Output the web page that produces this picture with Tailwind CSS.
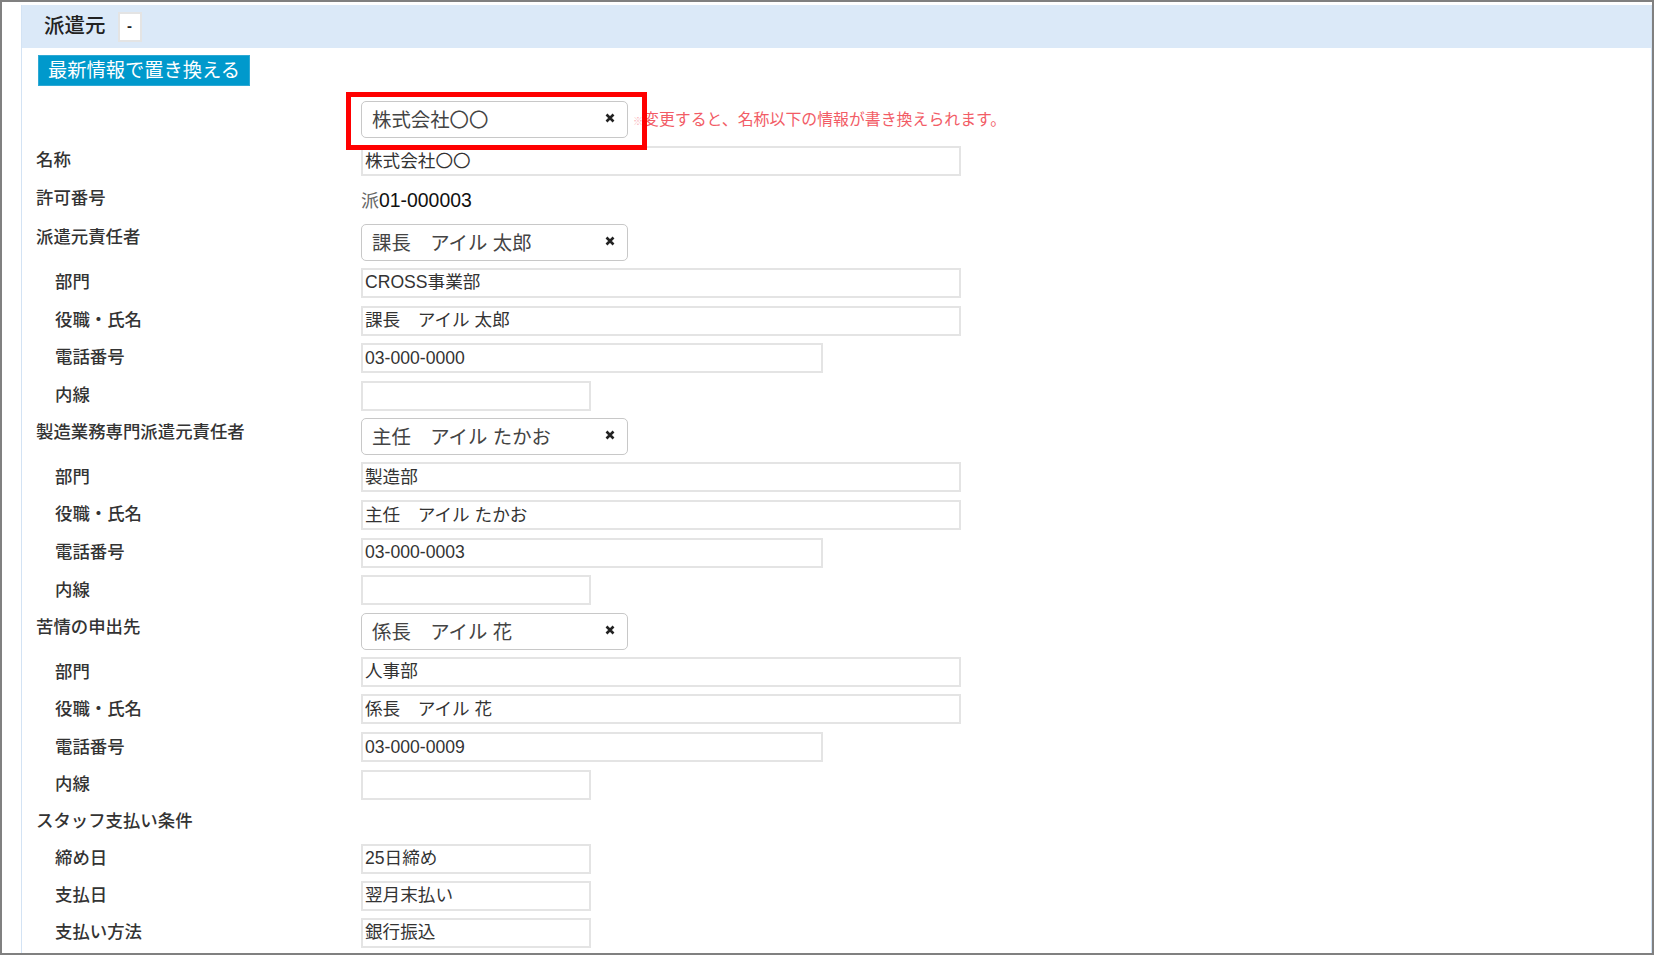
<!DOCTYPE html>
<html lang="ja">
<head>
  <meta charset="UTF-8">
  <title>派遣元</title>
  <script src="https://cdn.jsdelivr.net/npm/@tailwindcss/browser@4"></script>
</head>
<body class="bg-white font-['Liberation_Sans','Noto_Sans_CJK_JP',sans-serif] text-[#333]">
  <div class="relative w-[1654px] h-[955px] overflow-hidden border-2 border-[#808080] pt-[3px] pl-[19px]">
    <div class="h-full border-x border-[#d3e3f4]">

      <!-- Header -->
      <div class="h-[43px] bg-[#dbe9f8] flex items-center pl-[22px]">
        <span class="text-[20.5px] font-medium text-[#222]">派遣元</span>
        <button class="ml-[12px] w-[24px] h-[30px] bg-white border-2 border-[#e4e4e4] text-[15px] font-bold text-[#222]">-</button>
      </div>

      <!-- Replace button -->
      <div class="pl-[16px] pt-[7px]">
        <button class="w-[212px] h-[31px] bg-[#0099cc] border border-[#2fa9d4] text-white text-[19.3px] leading-none">最新情報で置き換える</button>
      </div>

      <!-- Form -->
      <div class="pt-[15px] pl-[14px] text-[17.6px]">

        <div class="flex h-[37px] mb-[8px]">
          <div class="w-[325px]"></div>
          <div class="w-[267px] h-[37px] border border-[#c8c8c8] rounded-[5px] flex items-center justify-between pl-[10px] pr-[12px] text-[19.4px] text-[#444]">
            <span class="pt-[2px]">株式会社〇〇</span>
            <svg class="w-[10px] h-[10px] mb-[3px]" viewBox="0 0 10 10"><path d="M1.5 1.5 8.5 8.5M8.5 1.5 1.5 8.5" stroke="#222" stroke-width="2.6" fill="none"/></svg>
          </div>
          <span class="ml-[5px] text-[15.9px] text-[#f25c66] self-center pt-[1px]"><span class="text-[#f9b4b9] text-[10px]">※</span>変更すると、名称以下の情報が書き換えられます。</span>
        </div>

        <div class="flex items-center h-[30px] mb-[8.6px]">
          <label class="w-[325px] font-medium text-[17.4px] pb-[2px]">名称</label>
          <input value="株式会社〇〇" class="w-[600px] h-[30px] border-2 border-[#e4e4e4] pl-[2px] pb-[4px]">
        </div>
        <div class="flex items-center h-[29px] mb-[10.5px]">
          <label class="w-[325px] font-medium text-[17.4px] pb-[3px]">許可番号</label>
          <span class="text-[#111] text-[19.4px] pt-[2px]"><span class="text-[#666] text-[18px]">派</span>01-000003</span>
        </div>

        <div class="flex h-[37px] mb-[7px]">
          <label class="w-[325px] font-medium text-[17.4px]">派遣元責任者</label>
          <div class="w-[267px] h-[37px] border border-[#c8c8c8] rounded-[5px] flex items-center justify-between pl-[10px] pr-[12px] text-[19.4px] text-[#444]">
            <span class="pt-[2px]">課長　アイル 太郎</span>
            <svg class="w-[10px] h-[10px] mb-[3px]" viewBox="0 0 10 10"><path d="M1.5 1.5 8.5 8.5M8.5 1.5 1.5 8.5" stroke="#222" stroke-width="2.6" fill="none"/></svg>
          </div>
        </div>
        <div class="flex items-center h-[30px] mb-[7.6px]">
          <label class="w-[325px] pl-[19px] font-medium text-[17.4px] pb-[2px]">部門</label>
          <input value="CROSS事業部" class="w-[600px] h-[30px] border-2 border-[#e4e4e4] pl-[2px] pb-[5px]">
        </div>
        <div class="flex items-center h-[30px] mb-[7.6px]">
          <label class="w-[325px] pl-[19px] font-medium text-[17.4px] pb-[2px]">役職・氏名</label>
          <input value="課長　アイル 太郎" class="w-[600px] h-[30px] border-2 border-[#e4e4e4] pl-[2px] pb-[4px]">
        </div>
        <div class="flex items-center h-[30px] mb-[7.6px]">
          <label class="w-[325px] pl-[19px] font-medium text-[17.4px] pb-[2px]">電話番号</label>
          <input value="03-000-0000" class="w-[462px] h-[30px] border-2 border-[#e4e4e4] pl-[2px]">
        </div>
        <div class="flex items-center h-[30px] mb-[7.6px]">
          <label class="w-[325px] pl-[19px] font-medium text-[17.4px] pb-[2px]">内線</label>
          <input class="w-[230px] h-[30px] border-2 border-[#e4e4e4] pl-[2px]">
        </div>

        <div class="flex h-[37px] mb-[7px]">
          <label class="w-[325px] font-medium text-[17.4px] pt-[1px]">製造業務専門派遣元責任者</label>
          <div class="w-[267px] h-[37px] border border-[#c8c8c8] rounded-[5px] flex items-center justify-between pl-[10px] pr-[12px] text-[19.4px] text-[#444]">
            <span class="pt-[2px]">主任　アイル たかお</span>
            <svg class="w-[10px] h-[10px] mb-[3px]" viewBox="0 0 10 10"><path d="M1.5 1.5 8.5 8.5M8.5 1.5 1.5 8.5" stroke="#222" stroke-width="2.6" fill="none"/></svg>
          </div>
        </div>
        <div class="flex items-center h-[30px] mb-[7.6px]">
          <label class="w-[325px] pl-[19px] font-medium text-[17.4px]">部門</label>
          <input value="製造部" class="w-[600px] h-[30px] border-2 border-[#e4e4e4] pl-[2px] pb-[4px]">
        </div>
        <div class="flex items-center h-[30px] mb-[7.6px]">
          <label class="w-[325px] pl-[19px] font-medium text-[17.4px] pb-[2px]">役職・氏名</label>
          <input value="主任　アイル たかお" class="w-[600px] h-[30px] border-2 border-[#e4e4e4] pl-[2px] pb-[4px]">
        </div>
        <div class="flex items-center h-[30px] mb-[7.6px]">
          <label class="w-[325px] pl-[19px] font-medium text-[17.4px] pb-[2px]">電話番号</label>
          <input value="03-000-0003" class="w-[462px] h-[30px] border-2 border-[#e4e4e4] pl-[2px]">
        </div>
        <div class="flex items-center h-[30px] mb-[7.6px]">
          <label class="w-[325px] pl-[19px] font-medium text-[17.4px]">内線</label>
          <input class="w-[230px] h-[30px] border-2 border-[#e4e4e4] pl-[2px]">
        </div>

        <div class="flex h-[37px] mb-[7px]">
          <label class="w-[325px] font-medium text-[17.4px] pt-[1px]">苦情の申出先</label>
          <div class="w-[267px] h-[37px] border border-[#c8c8c8] rounded-[5px] flex items-center justify-between pl-[10px] pr-[12px] text-[19.4px] text-[#444]">
            <span class="pt-[2px]">係長　アイル 花</span>
            <svg class="w-[10px] h-[10px] mb-[3px]" viewBox="0 0 10 10"><path d="M1.5 1.5 8.5 8.5M8.5 1.5 1.5 8.5" stroke="#222" stroke-width="2.6" fill="none"/></svg>
          </div>
        </div>
        <div class="flex items-center h-[30px] mb-[7.6px]">
          <label class="w-[325px] pl-[19px] font-medium text-[17.4px]">部門</label>
          <input value="人事部" class="w-[600px] h-[30px] border-2 border-[#e4e4e4] pl-[2px] pb-[4px]">
        </div>
        <div class="flex items-center h-[30px] mb-[7.6px]">
          <label class="w-[325px] pl-[19px] font-medium text-[17.4px]">役職・氏名</label>
          <input value="係長　アイル 花" class="w-[600px] h-[30px] border-2 border-[#e4e4e4] pl-[2px] pb-[4px]">
        </div>
        <div class="flex items-center h-[30px] mb-[7.6px]">
          <label class="w-[325px] pl-[19px] font-medium text-[17.4px]">電話番号</label>
          <input value="03-000-0009" class="w-[462px] h-[30px] border-2 border-[#e4e4e4] pl-[2px]">
        </div>
        <div class="flex items-center h-[30px] mb-[7.6px]">
          <label class="w-[325px] pl-[19px] font-medium text-[17.4px] pb-[2px]">内線</label>
          <input class="w-[230px] h-[30px] border-2 border-[#e4e4e4] pl-[2px]">
        </div>

        <div class="flex items-center h-[30px] mb-[6.4px]">
          <label class="w-[325px] font-medium text-[17.4px] pb-[2px]">スタッフ支払い条件</label>
        </div>
        <div class="flex items-center h-[30px] mb-[7px]">
          <label class="w-[325px] pl-[19px] font-medium text-[17.4px] pb-[2px]">締め日</label>
          <input value="25日締め" class="w-[230px] h-[30px] border-2 border-[#e4e4e4] pl-[2px] pb-[4px]">
        </div>
        <div class="flex items-center h-[30px] mb-[7px]">
          <label class="w-[325px] pl-[19px] font-medium text-[17.4px] pb-[2px]">支払日</label>
          <input value="翌月末払い" class="w-[230px] h-[30px] border-2 border-[#e4e4e4] pl-[2px] pb-[4px]">
        </div>
        <div class="flex items-center h-[30px]">
          <label class="w-[325px] pl-[19px] font-medium text-[17.4px] pb-[2px]">支払い方法</label>
          <input value="銀行振込" class="w-[230px] h-[30px] border-2 border-[#e4e4e4] pl-[2px] pb-[4px]">
        </div>
      </div>
    </div>

    <!-- Annotation box over the first select -->
    <div class="absolute left-[344px] top-[90px] w-[301px] h-[58px] border-[5px] border-[#ff0000]"></div>
  </div>
</body>
</html>
